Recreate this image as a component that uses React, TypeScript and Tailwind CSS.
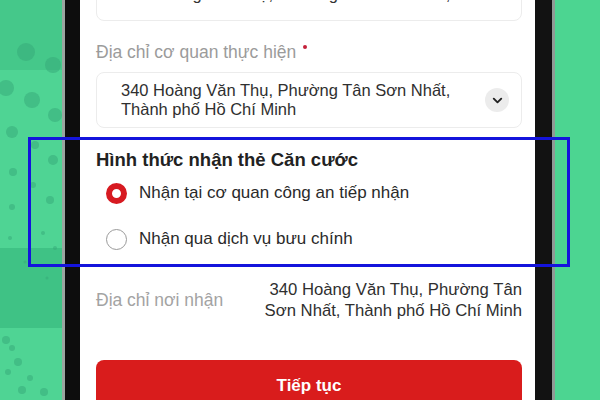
import { ChevronDown } from 'lucide-react';

const dots = [
  { cx: 26, cy: 52, r: 9 },
  { cx: 53, cy: 65, r: 8 },
  { cx: 6, cy: 88, r: 8 },
  { cx: 32, cy: 100, r: 8 },
  { cx: 55, cy: 115, r: 7 },
  { cx: 12, cy: 132, r: 6 },
  { cx: 35, cy: 145, r: 4 },
  { cx: 53, cy: 160, r: 5 },
  { cx: 13, cy: 172, r: 4 },
  { cx: 33, cy: 185, r: 3 },
  { cx: 50, cy: 200, r: 4 },
  { cx: 12, cy: 207, r: 3 },
  { cx: 43, cy: 233, r: 2 },
  { cx: 10, cy: 238, r: 2 },
  { cx: 55, cy: 248, r: 2 },
  { cx: 25, cy: 262, r: 1.5 },
  { cx: 47, cy: 278, r: 1.5 },
  { cx: 6, cy: 340, r: 4 },
  { cx: 12, cy: 348, r: 3 },
  { cx: 18, cy: 362, r: 4 },
  { cx: 8, cy: 372, r: 3 },
  { cx: 30, cy: 378, r: 3 },
  { cx: 22, cy: 390, r: 4 },
  { cx: 44, cy: 392, r: 4 },
];

const GreenSide = () => (
  <svg className="h-full w-full" viewBox="0 0 62 400" preserveAspectRatio="none">
    <rect width="62" height="400" fill="#4fd494" />
    <rect y="0" width="62" height="70" fill="#45c88a" />
    <rect y="248" width="62" height="80" fill="#3fc285" />
    {dots.map((d, i) => (
      <circle key={i} cx={d.cx} cy={d.cy} r={d.r} fill="#35a877" opacity="0.5" />
    ))}
  </svg>
);

const Radio = ({ checked, label }: { checked: boolean; label: string }) => (
  <div className="flex h-[22px] items-center gap-[12px] pl-[10px]">
    {checked ? (
      <div className="h-[21px] w-[21px] rounded-full border-[6px] border-[#d71a21] bg-white" />
    ) : (
      <div className="h-[21px] w-[21px] rounded-full border-[1.5px] border-[#9a9a9a] bg-white" />
    )}
    <span className="text-[17px] leading-[22px] text-[#2a2a2a]">{label}</span>
  </div>
);

export default function App() {
  return (
    <div
      className="relative flex h-[400px] w-[600px] overflow-hidden bg-[#4fd494]"
      style={{ fontFamily: '"Liberation Sans", Arial, sans-serif' }}
    >
      <div className="h-full w-[62px] shrink-0">
        <GreenSide />
      </div>
      <div className="h-full w-[3px] shrink-0 bg-[#9aa5a0]" />
      <div className="h-full w-[15px] shrink-0 bg-[#0d0d0d]" />

      <div className="flex h-full w-[455px] shrink-0 flex-col overflow-hidden bg-white pl-4 pr-[13px] [&>*]:shrink-0">
        <div className="-mt-[40px] h-[61px] overflow-hidden rounded-lg border border-[#ececec]">
          <div className="pl-6 pt-[23px] text-[16.5px] leading-[20px] text-[#333]">
            340 Hoàng Văn Thụ, Phường Tân Sơn Nhất,
          </div>
        </div>

        <div className="mt-[20px] flex h-[22px] items-start text-[17.5px] leading-[22px] text-[#9b9b9b]">
          <span>Địa chỉ cơ quan thực hiện</span>
          <span className="ml-[7px] mt-[4px] h-[4px] w-[4px] rounded-full bg-[#c4213a]" />
        </div>

        <div className="mt-[9px] flex h-[56px] items-center justify-between rounded-lg border border-[#ececec] pl-6 pr-3">
          <div className="text-[16.5px] leading-[19px] text-[#2f2f2f]">
            <div>340 Hoàng Văn Thụ, Phường Tân Sơn Nhất,</div>
            <div>Thành phố Hồ Chí Minh</div>
          </div>
          <div className="flex h-[24px] w-[24px] items-center justify-center rounded-full bg-[#ececec]">
            <ChevronDown className="h-[15px] w-[15px] text-[#222]" strokeWidth={3} />
          </div>
        </div>

        <div className="mt-[20px] text-[18.5px] font-bold leading-[24px] text-[#222]">
          Hình thức nhận thẻ Căn cước
        </div>

        <div className="mt-[10px] flex flex-col gap-[24px]">
          <Radio checked label="Nhận tại cơ quan công an tiếp nhận" />
          <Radio checked={false} label="Nhận qua dịch vụ bưu chính" />
        </div>

        <div className="mt-[29px] flex items-center justify-between">
          <span className="text-[17.5px] text-[#a3a3a3]">Địa chỉ nơi nhận</span>
          <div className="text-right text-[16.7px] leading-[21px] text-[#2f2f2f]">
            <div>340 Hoàng Văn Thụ, Phường Tân</div>
            <div>Sơn Nhất, Thành phố Hồ Chí Minh</div>
          </div>
        </div>

        <button className="mt-[39px] flex h-[50px] items-start justify-center rounded-lg bg-[#d91c1c] pt-[15px] text-[17px] font-bold leading-[22px] text-white">
          Tiếp tục
        </button>
      </div>

      <div className="h-full w-[17px] shrink-0 bg-[#121212]" />
      <div className="h-full w-[3px] shrink-0 bg-[#8f9a95]" />
      <div className="h-full flex-1 bg-[#4cd591]" />

      <div className="pointer-events-none absolute left-[28px] top-[137px] h-[130px] w-[542px] border-[3px] border-[#1414dc]" />
    </div>
  );
}
